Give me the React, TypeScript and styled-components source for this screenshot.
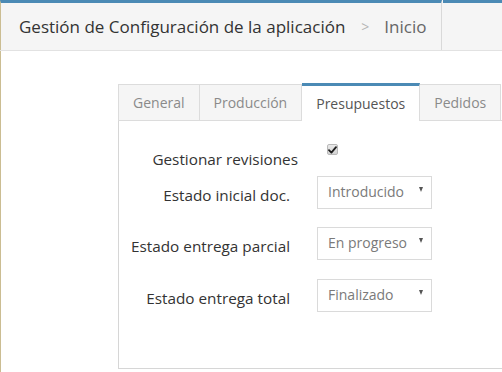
import React from "react";
import styled, { createGlobalStyle } from "styled-components";

const Global = createGlobalStyle`
  html, body {
    margin: 0;
    padding: 0;
    background: #ffffff;
    overflow: hidden;
  }
  body {
    font-family: "Open Sans", "Noto Sans", sans-serif;
    color: #333;
  }
`;

const Page = styled.div`
  width: 502px;
  height: 372px;
  box-sizing: border-box;
  overflow: hidden;
  display: flex;
  flex-direction: column;
  position: relative;
`;

const Header = styled.header`
  display: flex;
  height: 51px;
  box-sizing: border-box;
  background: #f5f5f5;
  border-bottom: 1px solid #e2e2e2;
  flex: none;
`;

const HeaderCell = styled.div<{ $main?: boolean }>`
  box-sizing: border-box;
  border-top: 3px solid #4b8ab5;
  display: flex;
  align-items: center;
  ${(p) =>
    p.$main
      ? `width: 442px; padding-left: 18px; border-right: 1px solid #d9d9d9; border-left: 1px solid #cbbd92;`
      : `flex: 1; margin-left: 1px;`}
`;

const Title = styled.span`
  font-size: 17px;
  color: #333;
  white-space: nowrap;
`;

const Sep = styled.span`
  font-size: 14px;
  color: #b5b5b5;
  margin: 0 15px 0 16px;
`;

const Crumb = styled.span`
  font-size: 17px;
  color: #666;
`;

const Body = styled.div`
  flex: 1;
  border-left: 1px solid #cbbd92;
  padding: 33px 0 0 117px;
  display: flex;
  flex-direction: column;
`;

const TabBar = styled.ul`
  list-style: none;
  margin: 0;
  padding: 0;
  display: flex;
  align-items: flex-end;
  border-bottom: 1px solid #dcdcdc;
  width: 500px;
  height: 37px;
  box-sizing: border-box;
`;

const Tab = styled.li<{ $active?: boolean }>`
  box-sizing: border-box;
  font-size: 14px;
  padding: 0 14px;
  display: flex;
  align-items: center;
  white-space: nowrap;
  border-right: 1px solid #dcdcdc;
  &:first-child {
    border-left: 1px solid #dcdcdc;
  }
  ${(p) =>
    p.$active
      ? `
    height: 38px;
    margin-bottom: -1px;
    background: #ffffff;
    color: #555;
    border-top: 3px solid #4b8ab5;
    padding-bottom: 1px;
  `
      : `
    height: 36px;
    background: #f5f5f5;
    color: #8a8a8a;
    border-top: 1px solid #dcdcdc;
  `}
`;

const Panel = styled.div`
  width: 500px;
  height: 248px;
  box-sizing: border-box;
  border-left: 1px solid #d6d6d6;
  border-bottom: 1px solid #d6d6d6;
  padding-top: 22px;
  display: flex;
  flex-direction: column;
`;

const Row = styled.div<{ $space: number }>`
  display: grid;
  grid-template-columns: 179px 1fr;
  column-gap: 19px;
  align-items: start;
  margin-bottom: ${(p) => p.$space}px;
`;

const Label = styled.label<{ $pad: number; $inset: number }>`
  font-size: 15.3px;
  line-height: 20px;
  color: #333;
  text-align: right;
  white-space: nowrap;
  padding-top: ${(p) => p.$pad}px;
  padding-right: ${(p) => p.$inset}px;
`;

const Check = styled.span`
  margin-left: 10px;
  width: 11px;
  height: 11px;
  box-sizing: border-box;
  border: 1px solid #b9b9b9;
  border-radius: 2px;
  background: linear-gradient(#e9e9e9, #d4d4d4);
  display: flex;
  align-items: center;
  justify-content: center;
  margin-top: 1px;
`;

const Select = styled.div`
  width: 115px;
  height: 33px;
  box-sizing: border-box;
  border: 1px solid #dadada;
  background: #fff;
  display: flex;
  align-items: center;
  justify-content: space-between;
  padding: 0 8px 2px 10px;
  font-size: 14px;
  color: #7a7a7a;
`;

const Arrow = styled.span`
  width: 0;
  height: 0;
  border-left: 2.5px solid transparent;
  border-right: 2.5px solid transparent;
  border-top: 5px solid #555;
  margin-top: -4px;
`;

const selects = [
  { label: "Estado inicial doc.", value: "Introducido", space: 18 },
  { label: "Estado entrega parcial", value: "En progreso", space: 19 },
  { label: "Estado entrega total", value: "Finalizado", space: 0 },
];

export default function App() {
  return (
    <>
      <Global />
      <Page>
        <Header>
          <HeaderCell $main>
            <Title>Gestión de Configuración de la aplicación</Title>
            <Sep>&gt;</Sep>
            <Crumb>Inicio</Crumb>
          </HeaderCell>
          <HeaderCell />
        </Header>
        <Body>
          <TabBar>
            <Tab>General</Tab>
            <Tab>Producción</Tab>
            <Tab $active>Presupuestos</Tab>
            <Tab>Pedidos</Tab>
          </TabBar>
          <Panel>
            <Row $space={7}>
              <Label $pad={6} $inset={0}>
                Gestionar revisiones
              </Label>
              <Check>
                <svg width="9" height="8" viewBox="0 0 9 8">
                  <path
                    d="M1 4.2 L3.4 6.6 L8 1.2"
                    fill="none"
                    stroke="#1e1e1e"
                    strokeWidth="1.8"
                    strokeLinecap="round"
                    strokeLinejoin="round"
                  />
                </svg>
              </Check>
            </Row>
            {selects.map((s) => (
              <Row key={s.label} $space={s.space}>
                <Label $pad={9} $inset={8}>
                  {s.label}
                </Label>
                <Select>
                  <span>{s.value}</span>
                  <Arrow />
                </Select>
              </Row>
            ))}
          </Panel>
        </Body>
      </Page>
    </>
  );
}
